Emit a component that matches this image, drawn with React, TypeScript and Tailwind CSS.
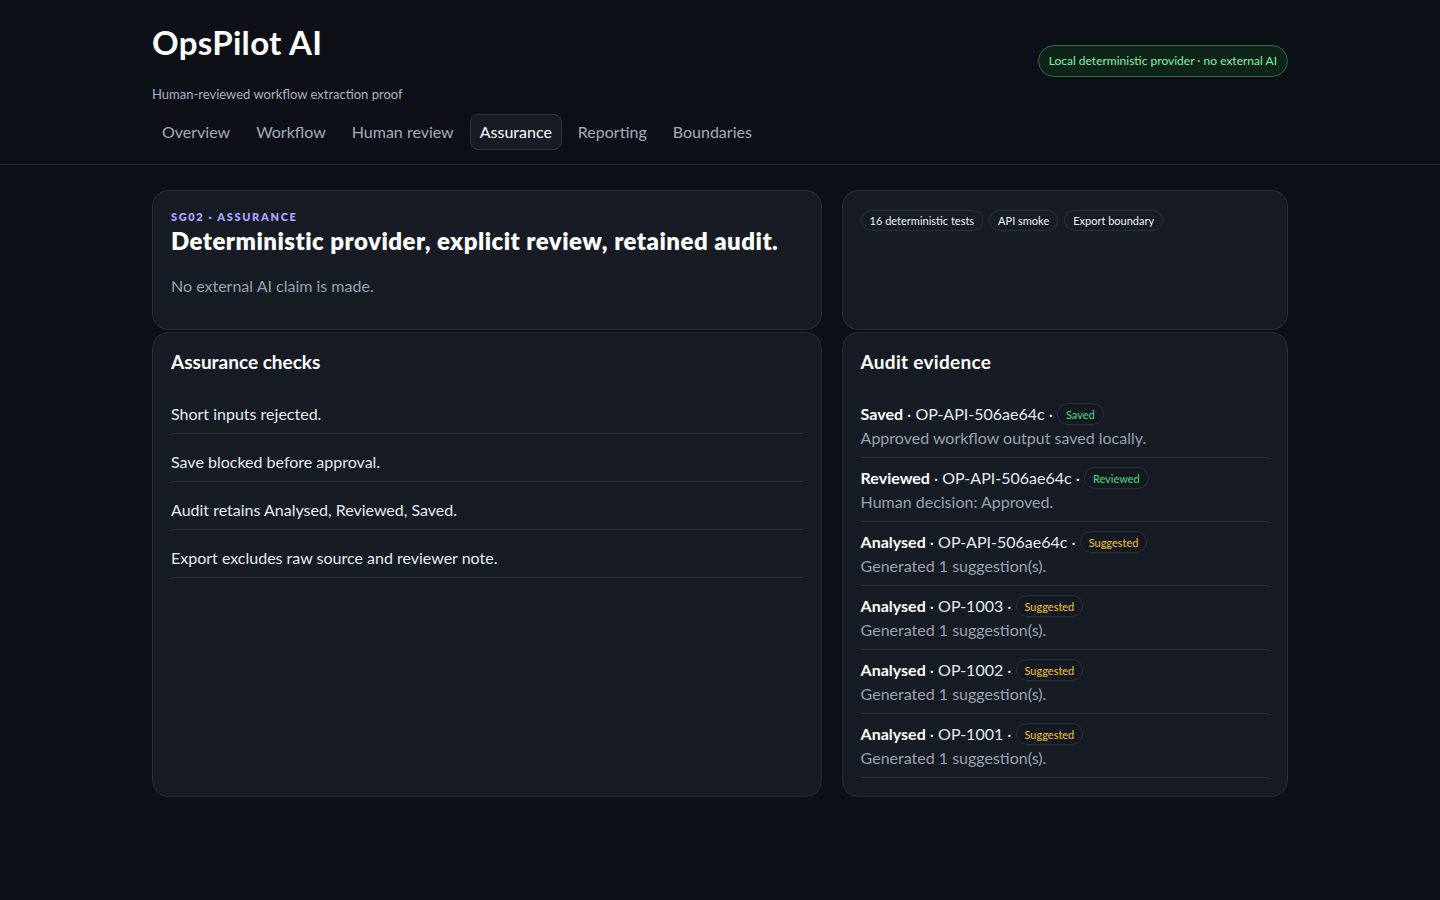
import React from 'react';

const tabs = ['Overview', 'Workflow', 'Human review', 'Assurance', 'Reporting', 'Boundaries'];

const checks = [
  'Short inputs rejected.',
  'Save blocked before approval.',
  'Audit retains Analysed, Reviewed, Saved.',
  'Export excludes raw source and reviewer note.',
];

type Evidence = { action: string; ref: string; status: 'Saved' | 'Reviewed' | 'Suggested'; detail: string };

const evidence: Evidence[] = [
  { action: 'Saved', ref: 'OP-API-506ae64c', status: 'Saved', detail: 'Approved workflow output saved locally.' },
  { action: 'Reviewed', ref: 'OP-API-506ae64c', status: 'Reviewed', detail: 'Human decision: Approved.' },
  { action: 'Analysed', ref: 'OP-API-506ae64c', status: 'Suggested', detail: 'Generated 1 suggestion(s).' },
  { action: 'Analysed', ref: 'OP-1003', status: 'Suggested', detail: 'Generated 1 suggestion(s).' },
  { action: 'Analysed', ref: 'OP-1002', status: 'Suggested', detail: 'Generated 1 suggestion(s).' },
  { action: 'Analysed', ref: 'OP-1001', status: 'Suggested', detail: 'Generated 1 suggestion(s).' },
];

function StatusBadge({ status }: { status: Evidence['status'] }) {
  const tone = status === 'Suggested' ? 'text-[#f5c542]' : 'text-[#4ade80]';
  return (
    <span className={`inline-flex h-[22px] items-center rounded-full border border-[#2a303c] bg-[#141821] px-2 text-[11px] leading-none ${tone}`}>
      {status}
    </span>
  );
}

export default function App() {
  return (
    <div className="min-h-screen bg-[#0d1017] text-[#e6e9ef] font-['Lato','Noto_Sans',sans-serif]">
      {/* Header */}
      <header className="border-b border-[#272c36]">
        <div className="mx-auto w-[1136px] pt-6 pb-[14px]">
          <div className="flex items-center justify-between">
            <div>
              <h1 className="text-[33px] font-bold leading-9 tracking-[0.01em] text-white">OpsPilot AI</h1>
              <p className="mt-[26px] text-[13px] leading-4 text-[#aab3c0]">Human-reviewed workflow extraction proof</p>
            </div>
            <span className="mt-[-4px] inline-flex h-[32px] items-center rounded-full border border-[#2e6a45] bg-[#0f2418] px-[10px] text-[12px] text-[#86efac]">
              Local deterministic provider · no external AI
            </span>
          </div>
          <nav className="mt-3 flex gap-[6px]">
            {tabs.map((t) => (
              <button
                key={t}
                className={
                  t === 'Assurance'
                    ? 'h-9 rounded-lg border border-[#2f3541] bg-[#171b24] px-[9px] text-[16px] text-white'
                    : 'h-9 rounded-lg border border-transparent px-[9px] text-[16px] text-[#a3adbb]'
                }
              >
                {t}
              </button>
            ))}
          </nav>
        </div>
      </header>

      {/* Main */}
      <main className="mx-auto grid w-[1136px] grid-cols-[3fr_2fr] gap-x-5 gap-y-0.5 pt-[25px]">
        <section className="h-[140px] rounded-2xl border border-[#272c37] bg-[#171b24] p-[18px]">
          <p className="text-[11px] font-extrabold uppercase leading-4 tracking-[0.15em] text-[#a8a3ff]">SG02 · Assurance</p>
          <h2 className="text-[24px] font-extrabold leading-8 tracking-[0.02em] text-white">Deterministic provider, explicit review, retained audit.</h2>
          <p className="mt-[17px] text-[16px] leading-6 text-[#98a2b1]">No external AI claim is made.</p>
        </section>

        <section className="h-[140px] rounded-2xl border border-[#272c37] bg-[#171b24] p-[18px]">
          <div className="mt-px flex gap-[6px]">
            {['16 deterministic tests', 'API smoke', 'Export boundary'].map((c) => (
              <span key={c} className="inline-flex h-[21px] items-center rounded-full border border-[#2a303c] px-2 text-[11px] leading-none text-[#f1f3f7]">
                {c}
              </span>
            ))}
          </div>
        </section>

        <section className="rounded-2xl border border-[#272c37] bg-[#171b24] px-[18px] pt-[15px] pb-[18px]">
          <h3 className="text-[19px] font-bold leading-7 text-white">Assurance checks</h3>
          <ul className="mt-[10px]">
            {checks.map((c) => (
              <li key={c} className="border-b border-[#2b303b] pt-4 pb-[7px] text-[16px] leading-6 text-[#e6e9ef]">
                {c}
              </li>
            ))}
          </ul>
        </section>

        <section className="rounded-2xl border border-[#272c37] bg-[#171b24] px-[18px] pt-[15px] pb-[18px]">
          <h3 className="text-[19px] font-bold leading-7 tracking-[0.015em] text-white">Audit evidence</h3>
          <ul className="mt-[18px]">
            {evidence.map((e, i) => (
              <li key={i} className="border-b border-[#2b303b] pt-2 pb-[7px] text-[16px] leading-6">
                <div className="flex items-center gap-1">
                  <span>
                    <span className="font-bold text-white">{e.action}</span>
                    <span className="text-[#e6e9ef]"> · {e.ref} · </span>
                  </span>
                  <StatusBadge status={e.status} />
                </div>
                <div className="text-[#98a2b1]">{e.detail}</div>
              </li>
            ))}
          </ul>
        </section>
      </main>
    </div>
  );
}
